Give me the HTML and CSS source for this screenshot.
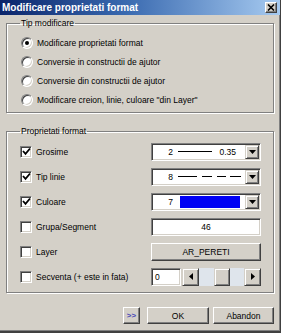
FILE: index.html
```html
<!DOCTYPE html>
<html>
<head>
<meta charset="utf-8">
<link rel="stylesheet" href="styles.css">
</head>
<body>
<div class="window">
  <div class="titlebar">
    <span class="title">Modificare proprietati format</span>
    <span class="close"><svg width="8" height="7" viewBox="0 0 8 7"><path d="M1 0.5 L7 6.5 M7 0.5 L1 6.5" stroke="#000" stroke-width="1.6"/></svg></span>
  </div>
  <div class="body">
    <fieldset class="group g1">
      <legend>Tip modificare</legend>
      <div class="radio-row"><span class="radio checked"></span><span>Modificare proprietati format</span></div>
      <div class="radio-row"><span class="radio"></span><span>Conversie in constructii de ajutor</span></div>
      <div class="radio-row"><span class="radio"></span><span>Conversie din constructii de ajutor</span></div>
      <div class="radio-row"><span class="radio"></span><span>Modificare creion, linie, culoare "din Layer"</span></div>
    </fieldset>

    <fieldset class="group g2">
      <legend>Proprietati format</legend>
      <div class="prop-row">
        <span class="chk-label"><span class="check"><svg width="9" height="9" viewBox="0 0 9 9"><path d="M1 4 L3.5 6.8 L8 1.5" fill="none" stroke="#000" stroke-width="1.8"/></svg></span>Grosime</span>
        <div class="combo">
          <div class="combo-val">
            <span class="num">2</span>
            <svg class="sample" width="34" height="3" viewBox="0 0 34 3"><line x1="0" y1="1.5" x2="34" y2="1.5" stroke="#000" stroke-width="1"/></svg>
            <span class="num2">0.35</span>
          </div>
          <span class="drop"><svg width="7" height="4" viewBox="0 0 7 4"><path d="M0 0 H7 L3.5 4 Z" fill="#000"/></svg></span>
        </div>
      </div>
      <div class="prop-row">
        <span class="chk-label"><span class="check"><svg width="9" height="9" viewBox="0 0 9 9"><path d="M1 4 L3.5 6.8 L8 1.5" fill="none" stroke="#000" stroke-width="1.8"/></svg></span>Tip linie</span>
        <div class="combo">
          <div class="combo-val">
            <span class="num">8</span>
            <svg class="sample" width="64" height="3" viewBox="0 0 64 3"><path d="M0 1.5 H19 M24 1.5 H34 M39 1.5 H48 M52 1.5 H63" stroke="#000" stroke-width="1"/></svg>
          </div>
          <span class="drop"><svg width="7" height="4" viewBox="0 0 7 4"><path d="M0 0 H7 L3.5 4 Z" fill="#000"/></svg></span>
        </div>
      </div>
      <div class="prop-row">
        <span class="chk-label"><span class="check"><svg width="9" height="9" viewBox="0 0 9 9"><path d="M1 4 L3.5 6.8 L8 1.5" fill="none" stroke="#000" stroke-width="1.8"/></svg></span>Culoare</span>
        <div class="combo">
          <div class="combo-val">
            <span class="num">7</span>
            <span class="swatch"></span>
          </div>
          <span class="drop"><svg width="7" height="4" viewBox="0 0 7 4"><path d="M0 0 H7 L3.5 4 Z" fill="#000"/></svg></span>
        </div>
      </div>
      <div class="prop-row">
        <span class="chk-label"><span class="check"></span>Grupa/Segment</span>
        <div class="edit center">46</div>
      </div>
      <div class="prop-row">
        <span class="chk-label"><span class="check"></span>Layer</span>
        <div class="btn wide">AR_PERETI</div>
      </div>
      <div class="prop-row">
        <span class="chk-label"><span class="check"></span>Secventa (+ este in fata)</span>
        <div class="spin">
          <div class="edit small">0</div>
          <div class="scroll">
            <span class="sbtn"><svg width="4" height="7" viewBox="0 0 4 7"><path d="M4 0 V7 L0 3.5 Z" fill="#000"/></svg></span>
            <span class="track"><span class="thumb"></span></span>
            <span class="sbtn"><svg width="4" height="7" viewBox="0 0 4 7"><path d="M0 0 V7 L4 3.5 Z" fill="#000"/></svg></span>
          </div>
        </div>
      </div>
    </fieldset>

    <div class="buttons">
      <div class="btn more">&gt;&gt;</div>
      <div class="btn ok">OK</div>
      <div class="btn cancel">Abandon</div>
    </div>
  </div>
</div>
</body>
</html>
```
FILE: styles.css
```css
* { box-sizing: border-box; }
body {
  margin: 0;
  background: #d4d0c8;
  font-family: "Liberation Sans", Arial, sans-serif;
  font-size: 8.5px;
  color: #000;
}
.window {
  width: 281px;
  height: 333px;
  background: #d4d0c8;
  border-right: 1px solid #404040;
  border-bottom: 2px solid #404040;
  box-shadow: inset -1px -1px 0 #808080;
}
.titlebar {
  height: 15px;
  background: linear-gradient(to right, #0a246a 0%, #3a6ab0 45%, #a6caf0 100%);
  display: flex;
  align-items: center;
  justify-content: space-between;
  padding: 0 3px 0 2px;
}
.title {
  color: #fff;
  font-weight: bold;
  font-size: 10px;
  line-height: 12px;
}
.close {
  width: 12px;
  height: 11px;
  background: #d4d0c8;
  border: 1px solid;
  border-color: #fff #404040 #404040 #fff;
  box-shadow: inset -1px -1px 0 #808080;
  display: flex;
  align-items: center;
  justify-content: center;
}
.body {
  padding: 3px 6px 0 6px;
}
.group {
  margin: 0;
  border: 1px solid #808080;
  box-shadow: inset 1px 1px 0 #fff, 1px 1px 0 #fff;
  min-inline-size: 0;
}
.group legend {
  padding: 0 1px;
  line-height: 10px;
  font-size: 8.5px;
}
.g1 {
  padding: 5px 4px 3px 14px;
}
.g1 legend { margin-left: -1px; }
.g2 {
  margin-top: 13px;
  padding: 3px 4px 3px 13px;
}
.radio-row {
  height: 19px;
  display: flex;
  align-items: center;
  gap: 4px;
}
.radio {
  width: 12px;
  height: 12px;
  border-radius: 50%;
  background: #fff;
  border: 1px solid;
  border-color: #808080 #fff #fff #808080;
  box-shadow: inset 1px 1px 0 #404040, inset -1px -1px 0 #d4d0c8;
  display: flex;
  align-items: center;
  justify-content: center;
  flex: none;
}
.radio.checked::after {
  content: "";
  width: 4px;
  height: 4px;
  border-radius: 50%;
  background: #000;
}
.prop-row {
  height: 25px;
  display: grid;
  grid-template-columns: 131px 110px;
  align-items: center;
}
.chk-label {
  display: flex;
  align-items: center;
  gap: 4px;
}
.check {
  width: 12px;
  height: 12px;
  background: #fff;
  border: 1px solid;
  border-color: #808080 #fff #fff #808080;
  box-shadow: inset 1px 1px 0 #404040, inset -1px -1px 0 #d4d0c8;
  display: flex;
  align-items: center;
  justify-content: center;
  flex: none;
}
.combo, .edit {
  height: 18px;
  background: #fff;
  border: 1px solid;
  border-color: #808080 #fff #fff #808080;
  box-shadow: inset 1px 1px 0 #404040, inset -1px -1px 0 #d4d0c8;
}
.combo {
  display: flex;
  align-items: stretch;
  padding: 1px;
}
.combo-val {
  flex: 1;
  display: flex;
  align-items: center;
}
.num {
  width: 20px;
  text-align: right;
}
.sample {
  margin-left: 5px;
  display: block;
}
.num2 {
  margin-left: auto;
  margin-right: 9px;
}
.swatch {
  margin-left: 7px;
  width: 60px;
  height: 12px;
  background: #0000f4;
}
.drop {
  width: 14px;
  background: #d4d0c8;
  border: 1px solid;
  border-color: #d4d0c8 #404040 #404040 #d4d0c8;
  box-shadow: inset 1px 1px 0 #fff, inset -1px -1px 0 #808080;
  display: flex;
  align-items: center;
  justify-content: center;
}
.edit {
  display: flex;
  align-items: center;
  padding: 0 3px;
}
.edit.center {
  justify-content: center;
}
.btn {
  background: #d4d0c8;
  border: 1px solid;
  border-color: #fff #404040 #404040 #fff;
  box-shadow: inset -1px -1px 0 #808080;
  display: flex;
  align-items: center;
  justify-content: center;
}
.btn.wide {
  height: 18px;
}
.spin {
  display: flex;
  gap: 1px;
  height: 18px;
}
.edit.small {
  width: 30px;
}
.scroll {
  flex: 1;
  display: flex;
}
.sbtn {
  width: 17px;
  background: #d4d0c8;
  border: 1px solid;
  border-color: #d4d0c8 #404040 #404040 #d4d0c8;
  box-shadow: inset 1px 1px 0 #fff, inset -1px -1px 0 #808080;
  display: flex;
  align-items: center;
  justify-content: center;
}
.track {
  flex: 1;
  background: #dfe5ec;
  display: flex;
  justify-content: center;
}
.thumb {
  width: 16px;
  background: #d4d0c8;
  border: 1px solid;
  border-color: #d4d0c8 #404040 #404040 #d4d0c8;
  box-shadow: inset 1px 1px 0 #fff, inset -1px -1px 0 #808080;
}
.buttons {
  margin-top: 14px;
  display: flex;
  justify-content: flex-end;
  height: 17px;
}
.more {
  width: 17px;
  color: #4a4ab8;
  font-weight: bold;
  font-size: 8px;
  margin-right: 7px;
}
.ok {
  width: 62px;
  margin-right: 4px;
}
.cancel {
  width: 61px;
}
```
